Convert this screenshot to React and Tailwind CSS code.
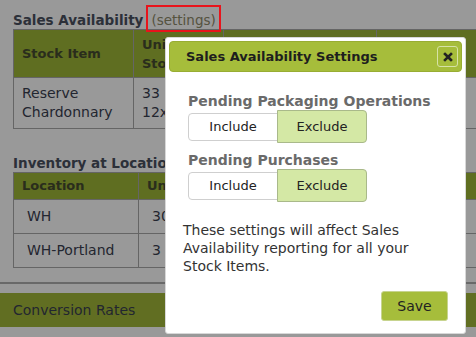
import React from 'react';

const Seg = () => (
    <div className="flex items-center">
        <button className="w-[90px] h-[28px] bg-white border border-[#cfcfcf] rounded-l text-[13px] text-[#222]">Include</button>
        <button className="w-[90px] h-[33px] -ml-px bg-[#d4e8a5] border border-[#a9b98a] rounded-r text-[13px] text-[#222]">Exclude</button>
    </div>
);

export default function App() {
    return (
        <div className="relative w-[476px] h-[337px] overflow-hidden bg-white font-['DejaVu_Sans',Verdana,sans-serif] text-[#444]">
            <div className="pt-[11px]">
                <h2 className="px-[13px] text-[13.5px] font-bold text-[#4a5060] leading-[18px] flex items-center">
                    Sales Availability
                    <span className="ml-[8px] text-[13.5px] font-normal text-[#8e8a6a] leading-[18px]">(settings)</span>
                </h2>
                <table className="ml-[13px] w-[520px] border-collapse text-[13px] text-[#3a4050]">
                    <thead>
                        <tr className="bg-[#9eb738] h-[48px] text-left">
                            <th className="w-[120px] px-[8px] border border-[#a8a8a8] font-bold text-[#464c30]">Stock Item</th>
                            <th className="w-[90px] px-[8px] border border-[#a8a8a8] font-bold text-[#464c30] leading-[19px]">Unit<br />Stock</th>
                            <th className="w-[153px] px-[8px] border border-[#a8a8a8] font-bold text-[#464c30]">Pending</th>
                            <th className="px-[8px] border border-[#a8a8a8] font-bold text-[#464c30]">Sales</th>
                        </tr>
                    </thead>
                    <tbody>
                        <tr className="h-[51px] text-[14px] leading-[19px]">
                            <td className="px-[8px] border border-[#a8a8a8]">Reserve<br />Chardonnary</td>
                            <td className="px-[8px] border border-[#a8a8a8]">33<br />12x</td>
                            <td className="px-[8px] border border-[#a8a8a8]">0</td>
                            <td className="px-[8px] border border-[#a8a8a8]">33</td>
                        </tr>
                    </tbody>
                </table>
                <h2 className="mt-[26px] px-[13px] text-[13.5px] font-bold text-[#4a5060] leading-[17px]">Inventory at Location</h2>
                <table className="ml-[13px] w-[520px] border-collapse text-[14px] text-[#3a4050]">
                    <thead>
                        <tr className="bg-[#9eb738] h-[27px] text-left text-[13px]">
                            <th className="w-[125px] px-[8px] border border-[#a8a8a8] font-bold text-[#464c30]">Location</th>
                            <th className="px-[8px] border border-[#a8a8a8] font-bold text-[#464c30]">Units</th>
                        </tr>
                    </thead>
                    <tbody>
                        <tr className="h-[34px]">
                            <td className="px-[13px] border border-[#a8a8a8]">WH</td>
                            <td className="px-[13px] border border-[#a8a8a8]">30</td>
                        </tr>
                        <tr className="h-[34px]">
                            <td className="px-[13px] border border-[#a8a8a8]">WH-Portland</td>
                            <td className="px-[13px] border border-[#a8a8a8]">3</td>
                        </tr>
                    </tbody>
                </table>
                <div className="mt-[14px] border-t-2 border-[#b0b0b0]"></div>
                <div className="mt-[9px] h-[34px] bg-[#a2b839] flex items-center px-[13px] text-[14px] text-[#3a4050]">Conversion Rates</div>
            </div>

            <div className="absolute inset-0 bg-black/40"></div>

            {/* highlight around the settings link */}
            <div className="absolute left-[146px] top-[5px] w-[75px] h-[27px] border-2 border-[#e8141c]"></div>

            <div className="absolute left-[165px] top-[37px] w-[301px] h-[297px] bg-white rounded-[3px] border border-[#d8d8d8] p-[3px]">
                <div className="h-[31px] bg-[#a6bd3b] rounded-[4px] border border-[#98ad33] flex items-center justify-between pl-[16px] pr-[3px]">
                    <span className="text-[13px] font-bold text-[#1e1e1e]">Sales Availability Settings</span>
                    <button className="w-[21px] h-[21px] border border-[#d6e2a6] rounded-[3px] flex items-center justify-center">
                        <svg width="10" height="10" viewBox="0 0 10 10"><path d="M2 2L8 8M8 2L2 8" stroke="#222" strokeWidth="2.6" strokeLinecap="square" /></svg>
                    </button>
                </div>
                <div className="pl-[19px] pr-[14px]">
                    <h3 className="mt-[20px] text-[14px] font-bold text-[#6a6a6a] leading-[18px]">Pending Packaging Operations</h3>
                    <Seg />
                    <h3 className="mt-[8px] text-[14px] font-bold text-[#6a6a6a] leading-[18px]">Pending Purchases</h3>
                    <Seg />
                    <p className="mt-[19px] -ml-[5px] text-[14px] leading-[18px] text-[#333]">These settings will affect Sales Availability reporting for all your Stock Items.</p>
                    <div className="flex justify-end mt-[16px]">
                        <button className="w-[67px] h-[30px] bg-[#a6bd3b] border border-[#c7d48f] rounded-[3px] text-[14px] text-[#222]">Save</button>
                    </div>
                </div>
            </div>
        </div>
    );
}
